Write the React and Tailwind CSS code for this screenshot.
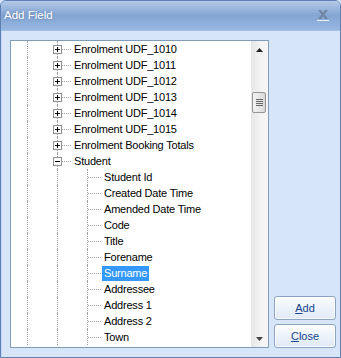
import React from 'react';

const rows = [
  { level: 1, label: 'Enrolment UDF_1010', box: 'plus' },
  { level: 1, label: 'Enrolment UDF_1011', box: 'plus' },
  { level: 1, label: 'Enrolment UDF_1012', box: 'plus' },
  { level: 1, label: 'Enrolment UDF_1013', box: 'plus' },
  { level: 1, label: 'Enrolment UDF_1014', box: 'plus' },
  { level: 1, label: 'Enrolment UDF_1015', box: 'plus' },
  { level: 1, label: 'Enrolment Booking Totals', box: 'plus' },
  { level: 1, label: 'Student', box: 'minus' },
  { level: 2, label: 'Student Id' },
  { level: 2, label: 'Created Date Time' },
  { level: 2, label: 'Amended Date Time' },
  { level: 2, label: 'Code' },
  { level: 2, label: 'Title' },
  { level: 2, label: 'Forename' },
  { level: 2, label: 'Surname', selected: true },
  { level: 2, label: 'Addressee' },
  { level: 2, label: 'Address 1' },
  { level: 2, label: 'Address 2' },
  { level: 2, label: 'Town' },
];

const Guide = () => (
  <div className="relative w-[30px] h-4 shrink-0">
    <span className="absolute left-[16px] top-0 h-4 border-l border-dotted border-[#a0a0a0]" />
  </div>
);

const ExpandBox = ({ type }) => (
  <span className="absolute left-[12px] top-[4px] w-[9px] h-[9px] border border-[#919191] bg-white flex items-center justify-center">
    <span className="absolute left-[1px] top-[3px] w-[5px] h-px bg-black" />
    {type === 'plus' && <span className="absolute left-[3px] top-[1px] w-px h-[5px] bg-black" />}
  </span>
);

const Row = ({ level, label, box, selected }) => (
  <div className="flex h-4 items-center">
    <Guide />
    {level === 2 && <Guide />}
    <div className="relative w-[30px] h-4 shrink-0">
      <span className="absolute left-[16px] top-0 h-4 border-l border-dotted border-[#a0a0a0]" />
      <span className="absolute left-[17px] top-[8px] w-[13px] border-t border-dotted border-[#a0a0a0]" />
      {box && <ExpandBox type={box} />}
    </div>
    <span
      className={
        'ml-px px-[2px] h-[15px] leading-[15px] whitespace-nowrap tracking-[-0.2px] ' +
        (selected ? 'bg-[#3399ff] text-white' : 'text-black')
      }
    >
      {label}
    </span>
  </div>
);

const ScrollBar = () => (
  <div className="w-[17px] h-full flex flex-col bg-gradient-to-r from-[#e6e6e6] via-[#f2f2f2] to-[#f7f7f7]">
    <div className="h-[17px] flex items-center justify-center">
      <svg width="7" height="4" viewBox="0 0 7 4">
        <path d="M3.5 0 L7 4 L0 4 Z" fill="#222" />
      </svg>
    </div>
    <div className="flex-1">
      <div className="ml-px mt-[34px] w-[14px] h-[21px] rounded-[2px] border border-[#959595] bg-gradient-to-r from-[#f3f3f3] to-[#d9d9d9] flex flex-col items-center justify-center gap-px">
        <span className="w-[7px] h-px bg-[#666]" />
        <span className="w-[7px] h-px bg-[#666]" />
        <span className="w-[7px] h-px bg-[#666]" />
        <span className="w-[7px] h-px bg-[#666]" />
      </div>
    </div>
    <div className="h-[17px] flex items-center justify-center">
      <svg width="7" height="4" viewBox="0 0 7 4">
        <path d="M0 0 L7 0 L3.5 4 Z" fill="#444" />
      </svg>
    </div>
  </div>
);

const DlgButton = ({ hot, rest }) => (
  <button className="w-[62px] h-[24px] rounded-[3px] border border-[#8ea4c4] bg-gradient-to-b from-[#fbfdff] via-[#edf3fb] to-[#dfe9f6] text-[#15428b] text-[11px] shadow-[inset_0_0_0_1px_rgba(255,255,255,0.8)]">
    <span className="underline">{hot}</span>
    {rest}
  </button>
);

const App = () => {
  return (
    <div className="w-[341px] h-[358px] bg-[#d6e5f8] font-['Liberation_Sans',Arial,sans-serif] text-[11px] select-none">
      <div className="w-full h-full border border-[#5e80b4] rounded-t-[6px] flex flex-col overflow-hidden">
        <div className="h-[30px] shrink-0 flex items-center justify-between pl-[3px] pr-[11px] bg-gradient-to-b from-[#b3c9e8] via-[#84a5d3] to-[#98b7e2] border-b border-[#a6c0e4]">
          <span className="text-white text-[11.5px] [text-shadow:0_0_3px_rgba(60,90,140,0.6)]">Add Field</span>
          <svg width="12" height="11" viewBox="0 0 12 11">
            <path d="M1 0 L4 0 L6 3 L8 0 L11 0 L7.5 4.5 L11 9 L8 9 L6 6 L4 9 L1 9 L4.5 4.5 Z" fill="#6a7f9a" opacity="0.85" />
            <rect x="0" y="10" width="12" height="1" fill="#eef4fc" />
          </svg>
        </div>
        <div className="flex-1 flex pl-[8px] pt-[9px] pb-[9px] pr-[4px] bg-[#d6e5f8] border-l border-[#c3d7f1]">
          <div className="w-[259px] h-[308px] border border-[#7f9db9] bg-white flex">
            <div className="flex-1 overflow-hidden">
              {rows.map((r) => (
                <Row key={r.label} {...r} />
              ))}
            </div>
            <ScrollBar />
          </div>
          <div className="flex-1 flex flex-col items-end justify-end gap-[4px]">
            <DlgButton hot="A" rest="dd" />
            <DlgButton hot="C" rest="lose" />
          </div>
        </div>
      </div>
    </div>
  );
};

export default App;
